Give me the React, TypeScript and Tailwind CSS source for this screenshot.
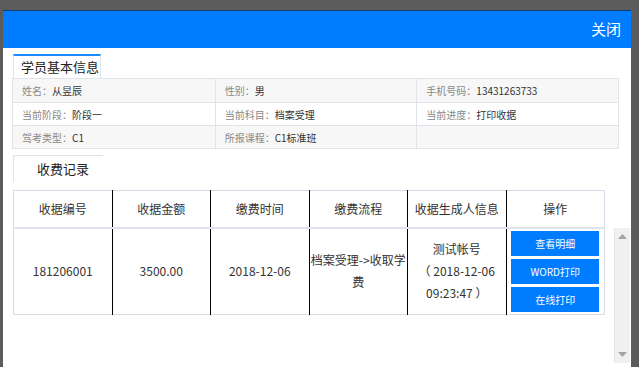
import React from "react";

const font = { fontFamily: '"Noto Sans CJK SC", "Noto Sans", sans-serif' };

const info = [
  [
    ["姓名", "从昱辰"],
    ["性别", "男"],
    ["手机号码", "13431263733"],
  ],
  [
    ["当前阶段", "阶段一"],
    ["当前科目", "档案受理"],
    ["当前进度", "打印收据"],
  ],
  [
    ["驾考类型", "C1"],
    ["所报课程", "C1标准班"],
    ["", ""],
  ],
];

const heads = ["收据编号", "收据金额", "缴费时间", "缴费流程", "收据生成人信息", "操作"];

export default function App() {
  return (
    <div
      className="w-[639px] h-[367px] overflow-hidden bg-[#5c5c5c] pt-[10px] pl-[3px]"
      style={font}
    >
      <div className="relative w-[628px] h-[357px] bg-white border-t border-[#123c73] flex flex-col">
        <div className="h-[37px] bg-[#007cff] flex items-center justify-end pr-[10px]">
          <span className="text-white text-[15px]">关闭</span>
        </div>

        <div className="pl-[9px] pr-[9px]">
          <div className="mt-[6px] ml-[1px] w-[88px] h-[24px] border-t-2 border-t-[#1a8cff] border-x border-x-[#dfe3ea] flex items-center pl-[7px] text-[13px] text-[#222] whitespace-nowrap">
            学员基本信息
          </div>

          <div className="w-[607px] border border-[#dfe3ea]">
            {info.map((row, i) => (
              <div
                key={i}
                className={`grid grid-cols-3 h-[23px] ${i > 0 ? "border-t border-[#dfe3ea]" : ""} ${
                  i % 2 === 0 ? "bg-[#f7f7f7]" : "bg-white"
                }`}
              >
                {row.map(([k, v], j) => (
                  <div
                    key={j}
                    className={`flex items-center pl-[9px] text-[10px] whitespace-nowrap ${
                      j > 0 ? "border-l border-[#dfe3ea]" : ""
                    }`}
                  >
                    {k && (
                      <>
                        <span className="text-[#888]">{k}：</span>
                        <span className="text-[#333]">{v}</span>
                      </>
                    )}
                  </div>
                ))}
              </div>
            ))}
          </div>

          <div className="mt-[6px] ml-[1px] w-[90px] h-[27px] border-t border-l border-[#dfe3ea] flex items-center pl-[23px] text-[13px] text-[#222] whitespace-nowrap">
            收费记录
          </div>

          <table className="mt-[8px] ml-[1px] w-[592px] table-fixed border-collapse border border-[#d8dce6] text-[12px] text-[#333]">
            <thead>
              <tr className="h-[37px] border-b-2 border-[#dfe3ea]">
                {heads.map((h, i) => (
                  <th
                    key={i}
                    className={`font-normal text-center whitespace-nowrap ${i > 0 ? "border-l border-l-black" : ""}`}
                  >
                    {h}
                  </th>
                ))}
              </tr>
            </thead>
            <tbody>
              <tr className="h-[87px] text-center">
                <td>181206001</td>
                <td className="border-l border-l-black">3500.00</td>
                <td className="border-l border-l-black">2018-12-06</td>
                <td className="border-l border-l-black leading-[22px] px-0 break-all">档案受理-&gt;收取学费</td>
                <td className="border-l border-l-black leading-[22px]">
                  测试帐号
                  <br />（ 2018-12-06
                  <br />
                  09:23:47 ）
                </td>
                <td className="border-l border-l-black">
                  <div className="flex flex-col gap-[3px] items-center">
                    {["查看明细", "WORD打印", "在线打印"].map((b) => (
                      <div
                        key={b}
                        className="w-[88px] h-[25px] bg-[#007cff] text-white text-[10px] flex items-center justify-center"
                      >
                        {b}
                      </div>
                    ))}
                  </div>
                </td>
              </tr>
            </tbody>
          </table>
        </div>

        <div className="absolute left-[611px] top-[217px] w-[16px] h-[135px] bg-[#f0f0f0] border-l border-[#e4e4e4] flex flex-col items-center justify-between py-[6px]">
          <svg width="9" height="5" viewBox="0 0 9 5">
            <path d="M0 5 L4.5 0 L9 5 Z" fill="#a3a3a3" />
          </svg>
          <svg width="9" height="5" viewBox="0 0 9 5">
            <path d="M0 0 L4.5 5 L9 0 Z" fill="#a3a3a3" />
          </svg>
        </div>
      </div>
    </div>
  );
}
